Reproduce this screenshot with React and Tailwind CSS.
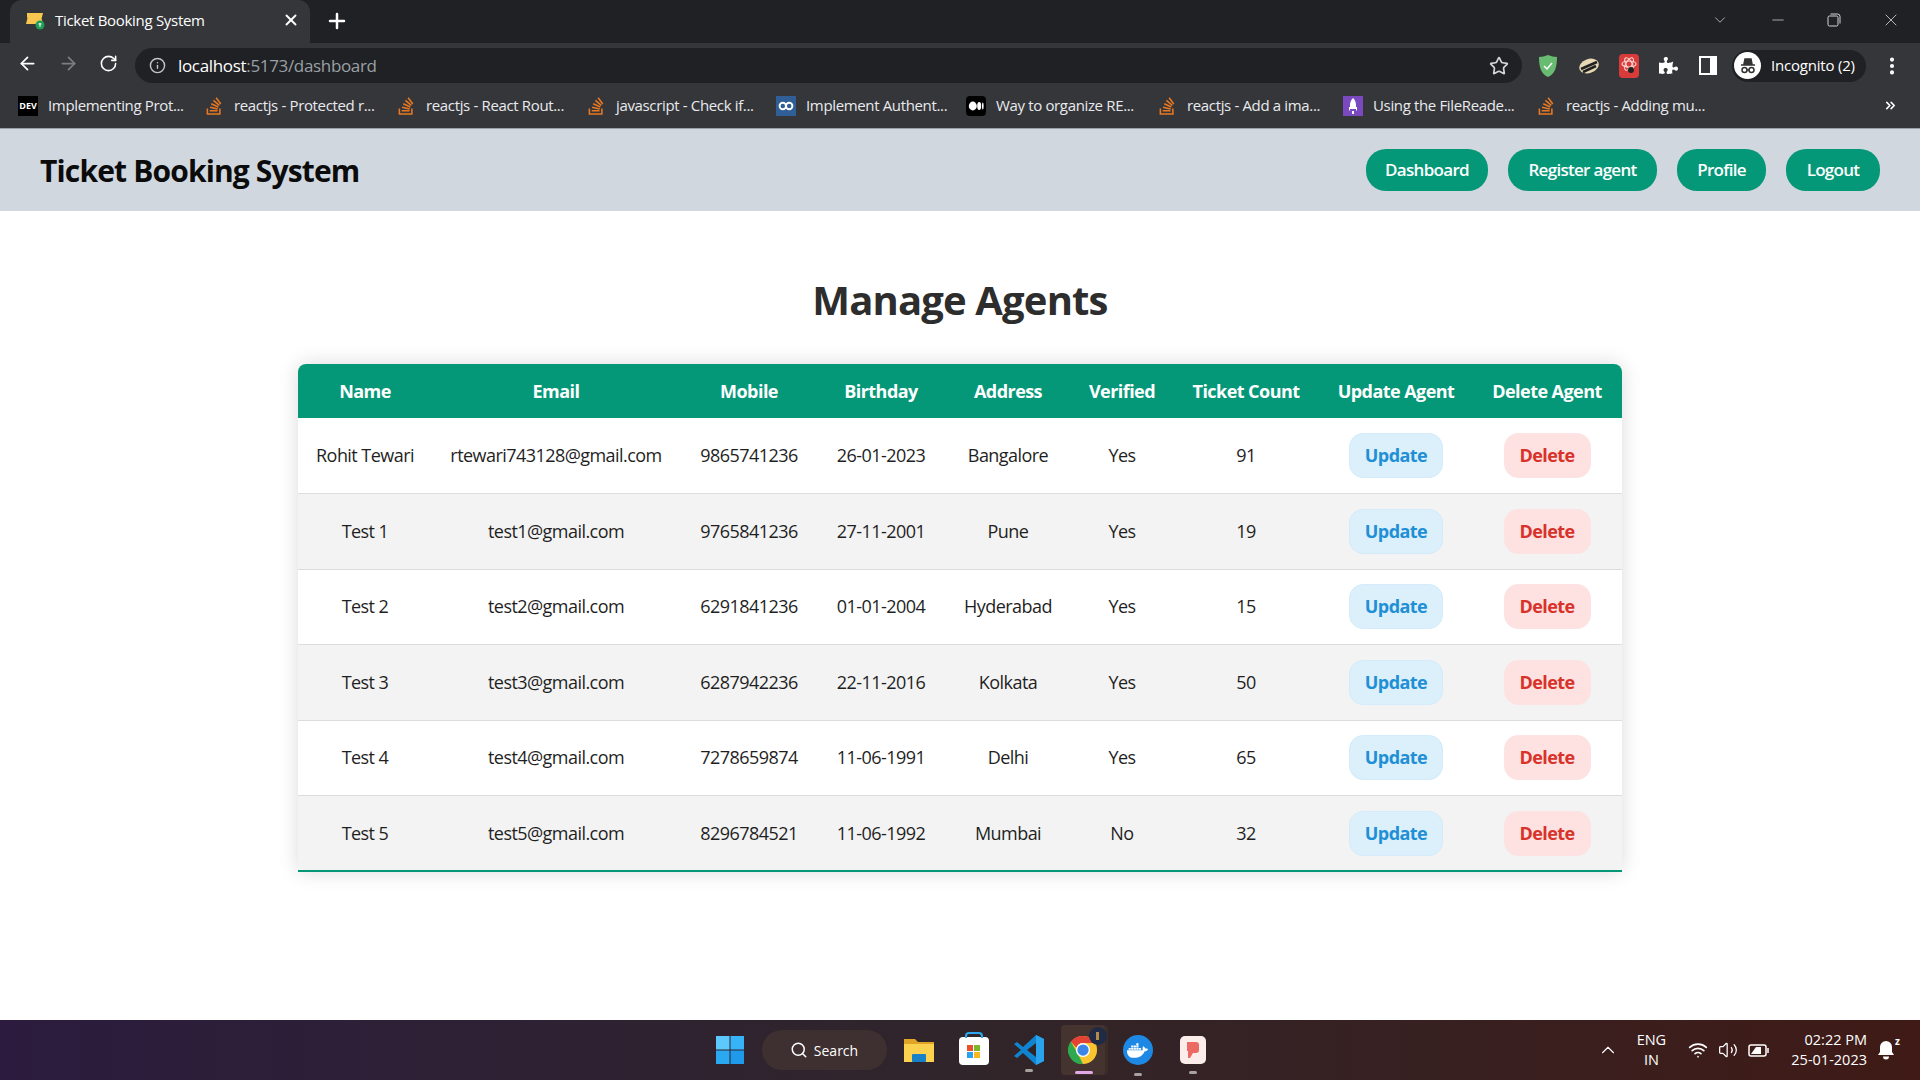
import React from 'react';
import { ArrowLeft, ArrowRight, RotateCw, Star, X, Plus, ChevronDown, ChevronUp, Minus, Info, MoreVertical, ChevronsRight, Search, Wifi, Volume2 } from 'lucide-react';
import { FaStackOverflow, FaPuzzlePiece, FaDocker } from 'react-icons/fa';

const bookmarks = [
  { icon: 'dev', label: 'Implementing Prot...', w: 'w-[186px]' },
  { icon: 'so', label: 'reactjs - Protected r...', w: 'w-[192px]' },
  { icon: 'so', label: 'reactjs - React Rout...', w: 'w-[190px]' },
  { icon: 'so', label: 'javascript - Check if...', w: 'w-[190px]' },
  { icon: 'cb', label: 'Implement Authent...', w: 'w-[190px]' },
  { icon: 'md', label: 'Way to organize RE...', w: 'w-[191px]' },
  { icon: 'so', label: 'reactjs - Add a ima...', w: 'w-[186px]' },
  { icon: 'fr', label: 'Using the FileReade...', w: 'w-[193px]' },
  { icon: 'so', label: 'reactjs - Adding mu...', w: 'w-[180px]' },
];

const agents = [
  ['Rohit Tewari', 'rtewari743128@gmail.com', '9865741236', '26-01-2023', 'Bangalore', 'Yes', '91'],
  ['Test 1', 'test1@gmail.com', '9765841236', '27-11-2001', 'Pune', 'Yes', '19'],
  ['Test 2', 'test2@gmail.com', '6291841236', '01-01-2004', 'Hyderabad', 'Yes', '15'],
  ['Test 3', 'test3@gmail.com', '6287942236', '22-11-2016', 'Kolkata', 'Yes', '50'],
  ['Test 4', 'test4@gmail.com', '7278659874', '11-06-1991', 'Delhi', 'Yes', '65'],
  ['Test 5', 'test5@gmail.com', '8296784521', '11-06-1992', 'Mumbai', 'No', '32'],
];

const BookmarkIcon = ({ type }) => {
  if (type === 'dev') {
    return <span className="w-5 h-5 bg-black text-white text-[9px] font-bold flex items-center justify-center">DEV</span>;
  }
  if (type === 'so') {
    return <FaStackOverflow className="w-5 h-5 text-[#e87922]" />;
  }
  if (type === 'cb') {
    return (
      <span className="w-5 h-5 bg-[#2f5f96] flex items-center justify-center">
        <svg viewBox="0 0 20 12" className="w-4 h-3" fill="none" stroke="#fff" strokeWidth="2.4">
          <circle cx="6" cy="6" r="4" />
          <circle cx="14" cy="6" r="4" />
        </svg>
      </span>
    );
  }
  if (type === 'md') {
    return (
      <span className="w-5 h-5 bg-black rounded-sm flex items-center justify-center">
        <svg viewBox="0 0 20 12" className="w-4 h-3" fill="#fff">
          <ellipse cx="6" cy="6" rx="5" ry="5.5" />
          <ellipse cx="14" cy="6" rx="2.5" ry="5" />
          <ellipse cx="18.5" cy="6" rx="1" ry="4.5" />
        </svg>
      </span>
    );
  }
  return (
    <span className="w-5 h-5 bg-[#7a49c0] flex items-center justify-center">
      <svg viewBox="0 0 12 16" className="w-3 h-4" fill="#fff">
        <path d="M6 0c2 2 3 4 3 7v4H3V7c0-3 1-5 3-7zM2 9v4l1-1V9zM10 9v4l-1-1V9zM5 13h2v3H5z" />
      </svg>
    </span>
  );
};

const BrowserChrome = () => (
  <div className="bg-[#35363a] text-white border-b border-[#9aa0a6]">
    {/* Tab strip */}
    <div className="h-[43px] bg-[#202124] flex items-start relative">
      <div className="ml-[10px] w-[300px] h-[43px] bg-[#35363a] rounded-t-xl flex items-center pl-[15px] pr-[10px] pb-[3px]">
        <svg viewBox="0 0 20 20" className="w-5 h-5 shrink-0">
          <path d="M2 3h16l-1 4a3 3 0 0 0 0 3l1 4H1l1-4a3 3 0 0 0 0-3z" fill="#f9c74f" />
          <circle cx="15" cy="15" r="4.5" fill="#1e9e57" />
          <path d="M15 13v4M13.500 14h3" stroke="#fff" />
        </svg>
        <span className="ml-[10px] text-[15px] tracking-[-0.3px] flex-1">Ticket Booking System</span>
        <X className="w-[18px] h-[18px]" strokeWidth={2.5} />
      </div>
      <Plus className="w-6 h-6 ml-[15px] mt-[9px]" strokeWidth={2.5} />
      <div className="ml-auto flex items-center gap-10 h-[40px] pr-[19px] text-[#d5d6d8]">
        <ChevronDown className="w-[18px] h-[18px]" strokeWidth={1} />
        <Minus className="w-[18px] h-[18px]" strokeWidth={1} />
        <svg viewBox="0 0 14 14" className="w-[14px] h-[14px]" fill="none" stroke="currentColor">
          <rect x="1" y="3" width="10" height="10" rx="1.5" />
          <path d="M3.5 1h7a2.500 2.500 0 0 1 2.500 2.500v7" />
        </svg>
        <X className="w-5 h-5" strokeWidth={1} />
      </div>
    </div>

    {/* Toolbar */}
    <div className="h-[40px] flex items-center">
      <div className="w-[135px] flex items-center pl-[17px] gap-5 shrink-0">
        <ArrowLeft className="w-[21px] h-[21px]" strokeWidth={2} />
        <ArrowRight className="w-[21px] h-[21px] text-[#7c7d80]" strokeWidth={2} />
        <RotateCw className="w-[19px] h-[19px]" strokeWidth={2} />
      </div>
      <div className="w-[1387px] h-[35px] mt-[5px] rounded-full bg-[#202124] flex items-center pl-[14px] pr-[13px]">
        <Info className="w-[17px] h-[17px] text-[#c4c7c5]" />
        <span className="ml-[12px] text-[17px] tracking-[-0.33px]">
          localhost<span className="text-[#9aa0a6]">:5173/dashboard</span>
        </span>
        <Star className="w-5 h-5 ml-auto text-[#d5d6d8]" />
      </div>
      <div className="flex-1 flex items-center pl-[16px] pr-[17px] mt-[5px]">
        <svg viewBox="0 0 20 24" className="w-5 h-6">
          <path d="M10 1c3 1 6 2 9 2 0 10-2 17-9 20C3 20 1 13 1 3c3 0 6-1 9-2z" fill="#68bc71" />
          <path d="M6 12l3 3 5-6" fill="none" stroke="#fff" strokeWidth="1.500" />
        </svg>
        <svg viewBox="0 0 22 18" className="w-[22px] h-[18px] ml-5">
          <ellipse cx="11" cy="9" rx="10" ry="7" fill="#e8d9b5" transform="rotate(-20 11 9)" />
          <path d="M3 12L19 5M5 15l13-6" stroke="#222" strokeWidth="2.500" />
        </svg>
        <span className="w-5 h-6 ml-[19px] bg-[#d93b3b] rounded-sm flex items-center justify-center">
          <svg viewBox="0 0 20 24" className="w-5 h-6" fill="none" stroke="#f7d4d0" strokeWidth="1.200">
            <ellipse cx="10" cy="10" rx="7" ry="3" />
            <ellipse cx="10" cy="10" rx="7" ry="3" transform="rotate(60 10 10)" />
            <ellipse cx="10" cy="10" rx="7" ry="3" transform="rotate(120 10 10)" />
            <circle cx="12" cy="16" r="3" fill="#222" stroke="none" />
          </svg>
        </span>
        <FaPuzzlePiece className="w-[19px] h-[19px] ml-5" />
        <span className="w-[18px] h-[19px] ml-[21px] border-[2.5px] border-white border-r-[7px] bg-[#35363a]" />
        <div className="ml-[15px] w-[134px] h-[32px] rounded-full bg-[#202124] flex items-center pl-[2px] shrink-0">
          <span className="w-[27px] h-[27px] rounded-full bg-white flex items-center justify-center">
            <svg viewBox="0 0 20 20" className="w-5 h-5" fill="none" stroke="#333" strokeWidth="1.500">
              <path d="M3 9h14M6 8l1-5h6l1 5z" fill="#333" />
              <circle cx="6.500" cy="14" r="2.500" />
              <circle cx="13.500" cy="14" r="2.500" />
              <path d="M9 14h2" />
            </svg>
          </span>
          <span className="ml-[10px] text-[15px] tracking-[-0.2px] whitespace-nowrap">Incognito (2)</span>
        </div>
        <MoreVertical className="w-[22px] h-[22px] ml-auto" strokeWidth={2.5} />
      </div>
    </div>

    {/* Bookmarks bar */}
    <div className="h-[45px] flex items-center pl-[18px] pr-[22px]">
      {bookmarks.map((b, i) => (
        <div key={i} className={`${b.w} flex items-center shrink-0`}>
          <BookmarkIcon type={b.icon} />
          <span className="ml-[10px] text-[15px] tracking-[-0.35px] whitespace-nowrap text-[#e8eaed]">{b.label}</span>
        </div>
      ))}
      <ChevronsRight className="w-[15px] h-[15px] ml-auto" strokeWidth={2.5} />
    </div>
  </div>
);

const Navbar = () => (
  <nav className="h-[82px] bg-[#d0d7de] flex items-center justify-between pl-[40px] pr-[40px]">
    <h1 className="text-[30px] font-bold text-[#0b0b0b] tracking-[-0.85px]">Ticket Booking System</h1>
    <div className="flex items-center gap-5">
      <button className="w-[122px] h-[42px] rounded-[20px] bg-[#059878] text-white text-[17px] font-semibold tracking-[-0.7px]">Dashboard</button>
      <button className="w-[149px] h-[42px] rounded-[20px] bg-[#059878] text-white text-[17px] font-semibold tracking-[-0.7px]">Register agent</button>
      <button className="w-[89px] h-[42px] rounded-[20px] bg-[#059878] text-white text-[17px] font-semibold tracking-[-0.7px]">Profile</button>
      <button className="w-[94px] h-[42px] rounded-[20px] bg-[#059878] text-white text-[17px] font-semibold tracking-[-0.7px]">Logout</button>
    </div>
  </nav>
);

const AgentsTable = () => (
  <div className="w-[1324px] mx-auto rounded-t-lg overflow-hidden shadow-[0_0_20px_rgba(0,0,0,0.15)]">
    <table className="w-full table-fixed border-collapse text-[18px] tracking-[-0.55px] text-[#1f1f1f]">
      <thead>
        <tr className="h-[54px] bg-[#059878] text-white">
          <th className="w-[134px] font-bold">Name</th>
          <th className="w-[248px] font-bold">Email</th>
          <th className="w-[138px] font-bold">Mobile</th>
          <th className="w-[126px] font-bold">Birthday</th>
          <th className="w-[128px] font-bold">Address</th>
          <th className="w-[100px] font-bold">Verified</th>
          <th className="w-[148px] font-bold">Ticket Count</th>
          <th className="w-[152px] font-bold">Update Agent</th>
          <th className="w-[150px] font-bold">Delete Agent</th>
        </tr>
      </thead>
      <tbody>
        {agents.map((row, i) => (
          <tr key={i} className={`h-[75.5px] border-b border-[#dddddd] last:border-b-2 last:border-[#059878] ${i % 2 === 1 ? 'bg-[#f3f3f3]' : 'bg-white'}`}>
            {row.map((cell, j) => (
              <td key={j} className="text-center">{cell}</td>
            ))}
            <td className="text-center">
              <button className="w-[94px] h-[45px] rounded-[14px] bg-[#dbf0fb] border border-[#d3ebfa] text-[#1f8fd6] font-bold">Update</button>
            </td>
            <td className="text-center">
              <button className="w-[87px] h-[45px] rounded-[14px] bg-[#fee2e2] border border-[#fde3e3] text-[#d8322a] font-bold">Delete</button>
            </td>
          </tr>
        ))}
      </tbody>
    </table>
  </div>
);

const Taskbar = () => (
  <div className="h-[60px] shrink-0 bg-gradient-to-r from-[#2c1b3e] via-[#30252a] to-[#3f1a16] flex items-center relative text-white">
    <div className="w-full flex items-center justify-center">
      <svg viewBox="0 0 30 30" className="w-[30px] h-[30px]">
        <rect x="1" y="1" width="13.500" height="13.500" fill="#5cc8fb" />
        <rect x="15.500" y="1" width="13.500" height="13.500" fill="#37b4f7" />
        <rect x="1" y="15.500" width="13.500" height="13.500" fill="#2aa8f0" />
        <rect x="15.500" y="15.500" width="13.500" height="13.500" fill="#1f9aea" />
      </svg>
      <div className="ml-[17px] w-[125px] h-10 rounded-full bg-[#3e2f30] flex items-center justify-center gap-[6px]">
        <Search className="w-[18px] h-[18px]" />
        <span className="text-[14px]">Search</span>
      </div>
      <svg viewBox="0 0 32 28" className="w-8 h-7 ml-[16px]">
        <path d="M1 3h11l3 3h16v20H1z" fill="#e0a526" />
        <path d="M1 8h30v18H1z" fill="#fad24f" />
        <rect x="9" y="18" width="14" height="8" rx="1" fill="#1680c9" />
      </svg>
      <div className="relative ml-[24px] w-[30px] h-[28px] mt-[2px] rounded bg-white flex items-center justify-center">
        <span className="absolute -top-[5px] left-[6px] w-[18px] h-[6px] rounded-t border-2 border-b-0 border-[#2aa8f0]" />
        <span className="grid grid-cols-2 gap-px">
          <i className="block w-[6px] h-[6px] bg-[#e8512c]" />
          <i className="block w-[6px] h-[6px] bg-[#7cb82a]" />
          <i className="block w-[6px] h-[6px] bg-[#2aa3ef]" />
          <i className="block w-[6px] h-[6px] bg-[#fab81c]" />
        </span>
      </div>
      <div className="relative ml-[24px] w-8 h-8">
        <svg viewBox="0 0 32 32" className="w-8 h-8">
          <path d="M23 1l8 4v22l-8 4L10 19l-6 5-3-2 7-6-7-6 3-2 6 5z" fill="#0f84d0" />
          <path d="M23 9v14l-9-7z" fill="#2d2528" />
          <path d="M23 1l8 4v22l-8 4z" fill="#2aa3ef" />
        </svg>
        <span className="absolute -bottom-[6px] left-[12px] w-[8px] h-[3px] rounded-full bg-[#a8a29f]" />
      </div>
      <div className="relative ml-4 w-[44px] h-[50px] rounded bg-[#44332f] flex items-center justify-center shadow-[3px_0_0_#3b2c2a]">
        <svg viewBox="0 0 32 32" className="w-[30px] h-[30px]">
          <circle cx="16" cy="16" r="15" fill="#f9c52f" />
          <path d="M16 1a15 15 0 0 1 13 7.500H16a7.500 7.500 0 0 0-7 5L3 7a15 15 0 0 1 13-6z" fill="#e34234" />
          <path d="M3 7l6.500 11.500L16 31a15 15 0 0 1-13-24z" fill="#2da94f" />
          <circle cx="16" cy="16" r="7.500" fill="#fff" />
          <circle cx="16" cy="16" r="6" fill="#3d85e8" />
        </svg>
        <span className="absolute top-[2px] right-[-2px] w-[18px] h-[18px] rounded-full bg-[#1f2a44] flex items-center justify-center">
          <i className="block w-[3px] h-[8px] bg-[#b58b4a]" />
        </span>
        <span className="absolute bottom-[1px] left-[14px] w-[18px] h-[3px] rounded-full bg-[#e3a8e8]" />
      </div>
      <div className="relative ml-[18px] w-[30px] h-[30px] rounded-full bg-[#1e88e5] flex items-center justify-center">
        <FaDocker className="w-[21px] h-[21px] text-white" />
        <span className="absolute -bottom-[11px] left-[11px] w-[8px] h-[3px] rounded-full bg-[#a8a29f]" />
      </div>
      <div className="relative ml-[27px] w-[26px] h-[28px] rounded-[5px] bg-[#fbeeea] flex items-center justify-center">
        <svg viewBox="0 0 14 18" className="w-[14px] h-[18px]" fill="#ec6a64">
          <path d="M1 1h9a3 3 0 0 1 3 3v5a3 3 0 0 1-3 3H7l-3 5H2V10H1z" />
        </svg>
        <span className="absolute -bottom-[10px] left-[9px] w-[8px] h-[3px] rounded-full bg-[#a8a29f]" />
      </div>
    </div>
    <div className="absolute right-0 top-0 h-full flex items-center">
      <ChevronUp className="w-[22px] h-[22px] mr-[17px]" strokeWidth={1.2} />
      <div className="w-[30px] text-center text-[14.5px] leading-[20px] mr-[22px] tracking-[-0.2px]">ENG<br />IN</div>
      <Wifi className="w-5 h-5" />
      <Volume2 className="w-5 h-5 ml-[10px]" strokeWidth={1.5} />
      <svg viewBox="0 0 22 16" className="w-[22px] h-4 ml-[10px]" fill="none" stroke="#fff" strokeWidth="1.500">
        <rect x="1" y="3" width="17" height="11" rx="2" />
        <path d="M20 6v5" />
        <path d="M3 12l5-7h5v7z" fill="#fff" stroke="none" />
      </svg>
      <div className="ml-[21px] text-right text-[14.5px] leading-[20px]">02:22 PM<br />25-01-2023</div>
      <div className="relative ml-[10px] mr-[25px] w-[18px] h-5">
        <svg viewBox="0 0 18 20" className="w-[18px] h-5" fill="#fff">
          <path d="M9 1a6 6 0 0 1 6 6v5l2 3H1l2-3V7a6 6 0 0 1 6-6z" />
          <path d="M6 16.500h6a3 3 0 0 1-6 0z" />
        </svg>
        <span className="absolute -top-[4px] -right-[5px] text-[10px] font-bold leading-none">z</span>
      </div>
    </div>
  </div>
);

export default function App() {
  return (
    <div className="h-screen flex flex-col font-['Open_Sans','Noto_Sans',sans-serif] bg-white overflow-hidden">
      <BrowserChrome />
      <Navbar />
      <main className="flex-1">
        <h2 className="text-center text-[40px] font-bold text-[#2d2d2d] mt-[64px] mb-[39px] leading-[50px] tracking-[-0.85px]">Manage Agents</h2>
        <AgentsTable />
      </main>
      <Taskbar />
    </div>
  );
}
